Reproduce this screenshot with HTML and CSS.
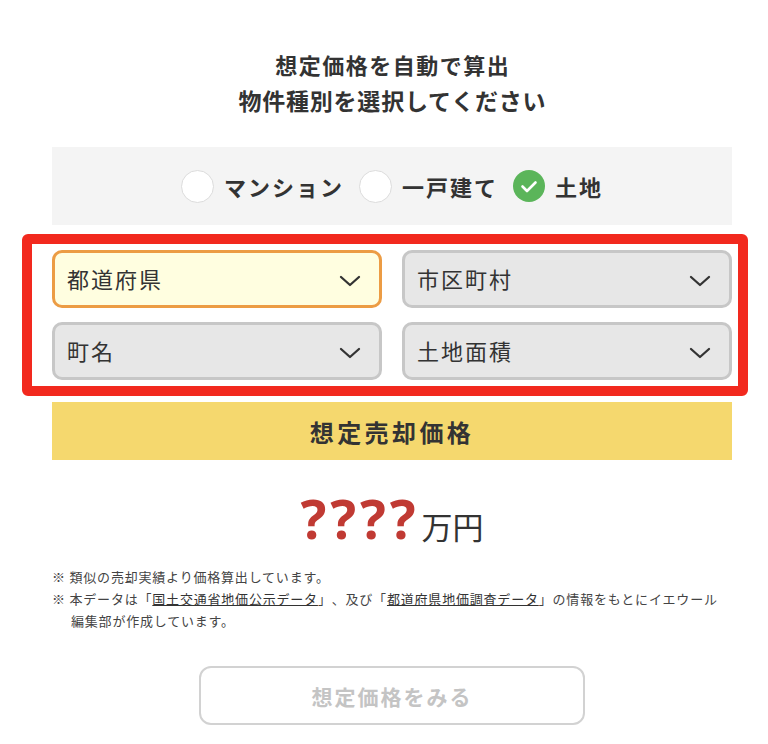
FILE: index.html
```html
<!DOCTYPE html>
<html lang="ja">
<head>
<meta charset="utf-8">
<title>想定価格を自動で算出</title>
<link rel="stylesheet" href="styles.css">
</head>
<body>
<div class="page">
  <h1 class="title">
    <span class="title-l1">想定価格を自動で算出</span>
    <span class="title-l2">物件種別を選択してください</span>
  </h1>

  <div class="types">
    <label class="type">
      <span class="radio"></span>
      <span class="type-label">マンション</span>
    </label>
    <label class="type">
      <span class="radio"></span>
      <span class="type-label">一戸建て</span>
    </label>
    <label class="type">
      <svg class="radio-on" viewBox="0 0 32 32" width="32" height="32"><circle cx="16" cy="16" r="16" fill="#5bb55a"/><polyline points="9.5,16.5 14,21 22.5,12.5" fill="none" stroke="#fff" stroke-width="2.6" stroke-linecap="round" stroke-linejoin="round"/></svg>
      <span class="type-label">土地</span>
    </label>
  </div>

  <div class="highlight">
    <div class="selects">
      <div class="select select-active"><span class="select-text">都道府県</span><svg class="chev" viewBox="0 0 22 12" width="22" height="12"><polyline points="2,2 11,10 20,2" fill="none" stroke="#333" stroke-width="2.3" stroke-linecap="round" stroke-linejoin="round"/></svg></div>
      <div class="select"><span class="select-text">市区町村</span><svg class="chev" viewBox="0 0 22 12" width="22" height="12"><polyline points="2,2 11,10 20,2" fill="none" stroke="#333" stroke-width="2.3" stroke-linecap="round" stroke-linejoin="round"/></svg></div>
      <div class="select"><span class="select-text">町名</span><svg class="chev" viewBox="0 0 22 12" width="22" height="12"><polyline points="2,2 11,10 20,2" fill="none" stroke="#333" stroke-width="2.3" stroke-linecap="round" stroke-linejoin="round"/></svg></div>
      <div class="select"><span class="select-text">土地面積</span><svg class="chev" viewBox="0 0 22 12" width="22" height="12"><polyline points="2,2 11,10 20,2" fill="none" stroke="#333" stroke-width="2.3" stroke-linecap="round" stroke-linejoin="round"/></svg></div>
    </div>
  </div>

  <div class="result-bar">想定売却価格</div>

  <div class="price"><span class="price-num">????</span><span class="price-unit">万円</span></div>

  <ul class="notes">
    <li>※ 類似の売却実績より価格算出しています。</li>
    <li>※ 本データは「<a href="#" class="note-link">国土交通省地価公示データ</a>」、及び「<a href="#" class="note-link">都道府県地価調査データ</a>」の情報をもとにイエウール<br>編集部が作成しています。</li>
  </ul>

  <div class="btn-wrap">
    <button class="btn" type="button">想定価格をみる</button>
  </div>
</div>
</body>
</html>
```

FILE: styles.css
```css
html, body {
  margin: 0;
  padding: 0;
  background: #fff;
}

body {
  font-family: "Noto Sans CJK JP", "Noto Sans", sans-serif;
  color: #333;
}

.page {
  width: 680px;
  margin-left: 52px;
  padding-top: 46px;
}

.title {
  margin: 0;
  display: flex;
  flex-direction: column;
  align-items: center;
  font-weight: 700;
  line-height: 36px;
}

.title-l1 {
  font-size: 22px;
  letter-spacing: 1.5px;
  margin-right: -1.5px;
}

.title-l2 {
  font-size: 23px;
  letter-spacing: 0.8px;
  margin-right: -0.8px;
}

.types {
  margin-top: 29px;
  height: 78px;
  background: #f4f4f4;
  display: flex;
  justify-content: center;
  align-items: center;
}

.type {
  display: flex;
  align-items: center;
}

.radio {
  width: 31px;
  height: 31px;
  border: 1px solid #dcdcdc;
  border-radius: 50%;
  background: #fff;
  margin-right: 10px;
}

.radio-on {
  display: block;
  margin-right: 10px;
}

.type-label {
  font-size: 22px;
  font-weight: 700;
  letter-spacing: 2px;
  line-height: 30px;
  margin-right: 15px;
}

.type:last-child .type-label {
  margin-right: 0;
}

.highlight {
  margin-top: 9px;
  margin-left: -30px;
  width: 726px;
  box-sizing: border-box;
  border: 10px solid #f2291e;
  border-radius: 6px;
  padding: 6px 6px 6px 20px;
}

.selects {
  display: grid;
  grid-template-columns: 330px 330px;
  column-gap: 20px;
  row-gap: 14px;
}

.select {
  height: 58px;
  box-sizing: border-box;
  border: 3px solid #c7c7c7;
  border-radius: 10px;
  background: #e7e7e7;
  display: flex;
  align-items: center;
  justify-content: space-between;
  padding: 0 18px 0 12px;
}

.select-active {
  border-color: #ec9c44;
  background: #fffee0;
}

.select-text {
  font-size: 22px;
  letter-spacing: 2px;
  line-height: 30px;
  color: #333;
  margin-top: -3px;
}

.chev {
  display: block;
  margin-top: 3px;
}

.result-bar {
  margin-top: 6px;
  height: 58px;
  background: #f5d86e;
  display: flex;
  justify-content: center;
  align-items: center;
  font-size: 24px;
  font-weight: 700;
  letter-spacing: 3.4px;
  color: #333;
}

.price {
  margin-top: 31px;
  text-align: center;
  font-family: "Noto Sans", sans-serif;
  font-size: 54px;
  line-height: 54px;
  height: 54px;
}

.price-num {
  font-weight: 700;
  color: #c03a33;
  letter-spacing: 4px;
  margin-right: 2px;
}

.price-unit {
  font-family: "Noto Sans CJK JP", sans-serif;
  font-size: 31px;
  line-height: 1;
  color: #333;
}

.notes {
  list-style: none;
  margin: 21px 0 0 0;
  padding: 0 0 0 19px;
  font-size: 13px;
  letter-spacing: 0.8px;
  line-height: 22px;
  color: #444;
  text-spacing-trim: space-all;
}

.notes li {
  text-indent: -19px;
}

.note-link {
  color: #333;
  text-decoration: underline;
}

.btn-wrap {
  margin-top: 34px;
  display: flex;
  justify-content: center;
}

.btn {
  width: 386px;
  height: 59px;
  box-sizing: border-box;
  border: 2px solid #d2d2d2;
  border-radius: 12px;
  background: #fff;
  font-family: "Noto Sans CJK JP", sans-serif;
  font-size: 21px;
  font-weight: 700;
  letter-spacing: 2px;
  color: #c4c4c4;
  padding: 0;
}
```
